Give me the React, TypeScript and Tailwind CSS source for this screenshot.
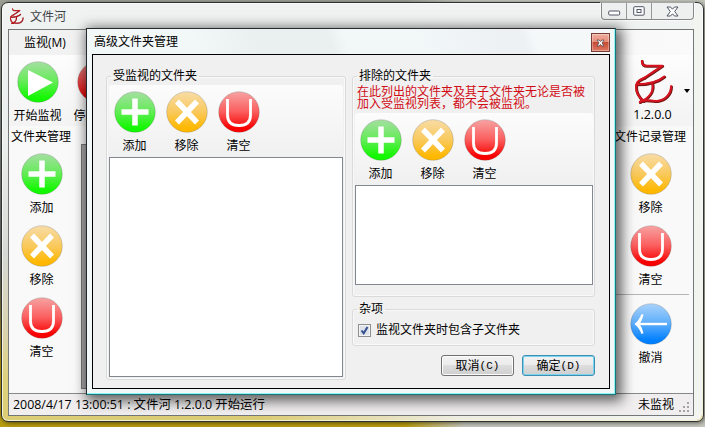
import type { ReactNode } from "react";

type Kind = "play" | "stop" | "add" | "remove" | "clear" | "undo";

const orbColors: Record<Kind, [string, string, string]> = {
  play: ["#a5dfa2", "#62ec55", "#12f800"],
  add: ["#a5dfa2", "#62ec55", "#12f800"],
  remove: ["#f8dca6", "#f9c95c", "#ffb800"],
  clear: ["#f7a3a3", "#fb5c5c", "#f80000"],
  stop: ["#e08484", "#e04040", "#e80000"],
  undo: ["#a8d2fb", "#5cadfb", "#0080ff"],
};

function Orb({ kind }: { kind: Kind }) {
  const [top, mid, bottom] = orbColors[kind];
  const id = `orb-${kind}`;
  return (
    <svg width="42" height="42" viewBox="0 0 42 42" className="block shrink-0">
      <defs>
        <linearGradient id={id} x1="0" y1="0" x2="0" y2="1">
          <stop offset="0" stopColor={top} />
          <stop offset="0.5" stopColor={mid} />
          <stop offset="0.9" stopColor={bottom} />
        </linearGradient>
      </defs>
      <circle cx="21" cy="21" r="20.3" fill={`url(#${id})`} stroke="#555" strokeOpacity="0.35" strokeWidth="0.7" />
      {kind === "play" && <path d="M11 9 36 21.5 11 35Z" fill="#fff" />}
      {kind === "add" && <path d="M21 7.5V34.5M7.5 21H34.5" stroke="#fff" strokeWidth="5.5" />}
      {kind === "remove" && <path d="M11 10.5 31 31.5M31 10.5 11 31.5" stroke="#fff" strokeWidth="5.5" />}
      {kind === "clear" && (
        <path d="M9.5 8V24Q9.5 34.5 21 34.5T32.5 24V8" fill="none" stroke="#fff" strokeWidth="2.8" />
      )}
      {kind === "undo" && (
        <g fill="#fff">
          <path d="M7 19.8H37V22.2H7Z" />
          <path d="M11.5 11 13.5 11.8Q12.5 17 9.5 21 12.5 25 13.5 30.2L11.5 31Q9 24.5 4.5 21 9 17.5 11.5 11Z" />
        </g>
      )}
    </svg>
  );
}

function Tool({ kind, label }: { kind: Kind; label: string }) {
  return (
    <div className="flex w-[52px] shrink-0 flex-col items-center">
      <Orb kind={kind} />
      <span className="mt-[4px] h-[17px] whitespace-nowrap pr-[1px] leading-[18px]">{label}</span>
    </div>
  );
}

const logoStrokes = [
  "M7 2C7 5 8 7 12 7L28 7L19 13L10 19",
  "M10 19C5 21 2 23 1.5 26",
  "M30 18C23 24 14 26 1.5 26C0 33 4 40 9 43",
  "M18 26C19 33 15 40 5 44",
  "M5 44C10 40 16 44 23 43C31 42 37 36 37 28",
];

function Logo({ size }: { size: number }) {
  return (
    <svg width={size} height={size * 1.175} viewBox="0 0 40 47" fill="none" strokeLinecap="round" strokeLinejoin="round" className="block shrink-0">
      <g stroke="#761414" strokeWidth="2.9" transform="translate(.5 .6)">
        {logoStrokes.map((d) => <path key={d} d={d} />)}
      </g>
      <g stroke="#d81420" strokeWidth="2.1">
        {logoStrokes.map((d) => <path key={d} d={d} />)}
      </g>
    </svg>
  );
}

function Group({ title, className, children }: { title: string; className: string; children: ReactNode }) {
  return (
    <fieldset className={`rounded-[3px] border border-[#dadada] shadow-[inset_0_0_0_1px_#f9f9f9] ${className}`}>
      <legend className="ml-[2px] h-4 px-[2px] leading-[15px]">{title}</legend>
      {children}
    </fieldset>
  );
}

function ListTools() {
  return (
    <div className="flex h-[72px] rounded-t-[3px] bg-linear-to-b from-[#fcfcfc] to-[#f0f0f0] pt-[6px]">
      <Tool kind="add" label="添加" />
      <Tool kind="remove" label="移除" />
      <Tool kind="clear" label="清空" />
    </div>
  );
}

function WindowControls() {
  return (
    <div className="flex h-[17px] w-[93px] rounded-b-[4px] border border-t-0 border-[#85888a] bg-[#edf0ee] shadow-[0_0_0_1px_#ffffff90]">
      <div className="flex w-[25px] items-end justify-center border-r border-[#96999a] pb-[3px]">
        <svg width="13" height="6" viewBox="0 0 13 6"><rect x=".7" y="1" width="11" height="4" rx="1" fill="#fff" stroke="#505866" /></svg>
      </div>
      <div className="flex w-[25px] items-center justify-center border-r border-[#96999a]">
        <svg width="12" height="10" viewBox="0 0 12 10"><rect x=".7" y=".7" width="10.5" height="8.5" rx="1" fill="#fff" stroke="#505866" /><rect x="4" y="3.5" width="4" height="3" fill="#fff" stroke="#505866" /></svg>
      </div>
      <div className="flex flex-1 items-center justify-center">
        <svg width="13" height="11" viewBox="0 0 13 11"><path d="M1 1H4.5L6.5 3.2 8.5 1H12L8.7 5.5 12 10H8.5L6.5 7.8 4.5 10H1L4.3 5.5Z" fill="#fff" stroke="#505866" /></svg>
      </div>
    </div>
  );
}

function MainWindow() {
  return (
    <div className="absolute left-[1px] top-[2px] flex h-[420px] w-[703px] flex-col rounded-[7px] border border-[#2e3230] bg-[linear-gradient(180deg,#f0f3f1_0,#e9eeec_35%,#d6d9d3_60%,#d9d3b0_78%,#ddd17d_90%,#dccd74_100%)] pl-[6px] pr-[9px] shadow-[1px_1px_4px_#0008,inset_0_0_0_1px_#ffffffb0]">
      <div className="absolute inset-y-[8px] right-[1px] w-[9px] bg-[#f2f4ef]" />
      <div className="absolute bottom-[1px] right-[1px] h-[7px] w-[440px] rounded-br-[6px] bg-[linear-gradient(90deg,transparent,#eeeee4_45%,#f4f5f1)]" />
      <div className="relative flex h-[26px] shrink-0 justify-between">
        <div className="flex pl-[2px] pt-[5px] text-[#3d4248]">
          <Logo size={14} />
          <span className="ml-[6px] leading-[17px]">文件河</span>
        </div>
        <WindowControls />
      </div>
      <div className="relative flex min-h-0 flex-col border border-[#737779] bg-[#f9f9f9]">
        <div className="h-[25px] shrink-0 bg-linear-to-r from-[#f1f1f1] to-[#fafafa] pl-[15px] leading-[26px]">监视(M)</div>
        <div className="flex h-[71px] shrink-0 justify-between bg-linear-to-b from-[#fdfdfd] to-[#f3f3f3]">
          <div className="flex gap-[8px] pl-[3px] pt-[6px]">
            <Tool kind="play" label="开始监视" />
            <Tool kind="stop" label="停止监视" />
          </div>
          <div className="flex w-[64px] justify-between pr-[3px]">
            <div className="flex w-[50px] flex-col items-center pt-[4px]">
              <Logo size={39} />
              <span className="mt-[1px] pr-[3px] text-[12.5px] leading-[18px]">1.2.0.0</span>
            </div>
            <div className="mt-[34px] h-0 w-0 border-x-[3px] border-t-[4px] border-x-transparent border-t-black" />
          </div>
        </div>
        <div className="flex h-[267px] shrink-0 justify-between">
          <div className="flex w-[72px] flex-col pl-[2px]">
            <span className="h-[27px] leading-[22px]">文件夹管理</span>
            <div className="flex flex-col gap-[9px] pl-[5px]">
              <Tool kind="add" label="添加" />
              <Tool kind="remove" label="移除" />
              <Tool kind="clear" label="清空" />
            </div>
          </div>
          <div className="mb-[4px] mt-[18px] flex-1 border border-[#777] bg-[#aaa]" />
          <div className="flex w-[90px] flex-col items-end pr-[4px]">
            <span className="h-[27px] pr-[3px] leading-[22px]">文件记录管理</span>
            <div className="flex flex-col gap-[9px] pr-[12px]">
              <Tool kind="remove" label="移除" />
              <Tool kind="clear" label="清空" />
            </div>
            <div className="mb-[8px] mt-[6px] h-px w-full bg-[#b6b6b6]" />
            <div className="pr-[12px]">
              <Tool kind="undo" label="撤消" />
            </div>
          </div>
        </div>
        <div className="flex h-[22px] shrink-0 justify-between border-t border-[#86888a] bg-[#f0eeee] pl-[4px] pr-[3px] leading-[21px]">
          <span className="text-[12.4px]">2008/4/17 13:00:51 : 文件河 1.2.0.0 开始运行</span>
          <div className="flex">
            <span>未监视</span>
            <svg width="11" height="11" viewBox="0 0 11 11" className="ml-[5px] mt-[8px]" fill="#a5a5a5">
              <path d="M8 0h2v2H8zM4 4h2v2H4zM8 4h2v2H8zM0 8h2v2H0zM4 8h2v2H4zM8 8h2v2H8z" />
            </svg>
          </div>
        </div>
      </div>
    </div>
  );
}

function Dialog() {
  return (
    <div className="absolute left-[86px] top-[28px] flex h-[367px] w-[530px] flex-col border border-b-[#19777a] border-l-[#25292b] border-r-[#19777a] border-t-[#25292b] bg-[#f2f7f8] px-[5px] pb-[5px] shadow-[3px_3px_12px_3px_#0000009a,inset_-1px_-1px_0_#8ff4f5]">
      <div className="flex h-[25px] shrink-0 justify-between bg-[linear-gradient(70deg,transparent_0_20%,#eaeff0_32%_46%,#f2f7f8_49%_62%,#edf1f3_78%_83%,#f4f8f9_85%)] pl-[2px]">
        <span className="leading-[26px]">高级文件夹管理</span>
        <div className="mt-[4px] flex h-[19px] w-[19px] items-center justify-center border border-[#783d35] bg-[linear-gradient(#f0afa0_0,#e58a77_48%,#c44c35_50%,#df7862_100%)] shadow-[inset_0_0_0_1px_#ffffff50]">
          <svg width="9" height="8" viewBox="0 0 9 8"><path d="M1 1H3L4.5 2.6 6 1H8L6 4 8 7H6L4.5 5.4 3 7H1L3 4Z" fill="#fff" stroke="#55464a" strokeWidth=".8" /></svg>
        </div>
      </div>
      <div className="flex min-h-0 flex-1 gap-[6px] border border-black bg-[#f0f0f0] pl-[13px] pt-[13px]">
        <Group title="受监视的文件夹" className="h-[312px] w-[240px] pl-[2px] pr-[2px]">
          <div className="pt-[1px]"><ListTools /></div>
          <div className="h-[220px] border border-[#828790] bg-white" />
        </Group>
        <div className="flex w-[243px] flex-col">
          <Group title="排除的文件夹" className="h-[229px] pl-[2px] pr-[1px]">
            <p className="h-[29px] whitespace-nowrap pl-[2px] pt-[2px] text-[12px] leading-[12px] text-[#d20c16]">
              在此列出的文件夹及其子文件夹无论是否被<br />加入受监视列表，都不会被监视。
            </p>
            <ListTools />
            <div className="h-[100px] border border-[#828790] bg-white" />
          </Group>
          <Group title="杂项" className="mt-[4px] h-[45px] px-[2px]">
            <label className="flex items-center gap-[5px] pl-[3px] pt-[4px]">
              <span className="flex h-[13px] w-[13px] items-center justify-center border border-[#8e8f8f] bg-[#dce2e8] shadow-[inset_0_0_0_1px_#f4f4f4]">
                <svg width="9" height="9" viewBox="0 0 9 9"><path d="M1.5 4.5 3.7 7.3 7.5 1" fill="none" stroke="#354e91" strokeWidth="2" /></svg>
              </span>
              <span className="leading-[18px]">监视文件夹时包含子文件夹</span>
            </label>
          </Group>
          <div className="mt-[9px] flex justify-end gap-[8px]">
            <button className="flex h-[21px] w-[73px] items-center justify-center rounded-[3px] border border-[#707070] bg-[linear-gradient(#f2f2f2_0,#ebebeb_49%,#dddddd_50%,#cfcfcf_100%)] leading-[18px] shadow-[inset_0_0_0_1px_#fcfcfc]">
              取消<span className="font-['Liberation_Mono',monospace] text-[11px]">(C)</span>
            </button>
            <button className="flex h-[21px] w-[73px] items-center justify-center rounded-[3px] border border-[#3f8fb3] bg-[linear-gradient(#f2f2f2_0,#ebebeb_49%,#dddddd_50%,#cfcfcf_100%)] leading-[18px] shadow-[inset_0_0_0_1px_#79d5ef]">
              确定<span className="font-['Liberation_Mono',monospace] text-[11px]">(D)</span>
            </button>
          </div>
        </div>
      </div>
    </div>
  );
}

export default function App() {
  return (
    <div className="relative h-[427px] w-[705px] overflow-hidden bg-[linear-gradient(180deg,#9ba196_0,#6f7470_50%,#64645a_65%,#b89c10_85%,#b89c10_100%)] font-['Open_Sans','Noto_Sans_CJK_SC',sans-serif] text-[12px] text-black">
      <div className="absolute bottom-0 right-0 h-[427px] w-[300px] bg-[linear-gradient(90deg,transparent,#c4c6bc_20%)]" />
      <MainWindow />
      <Dialog />
    </div>
  );
}
